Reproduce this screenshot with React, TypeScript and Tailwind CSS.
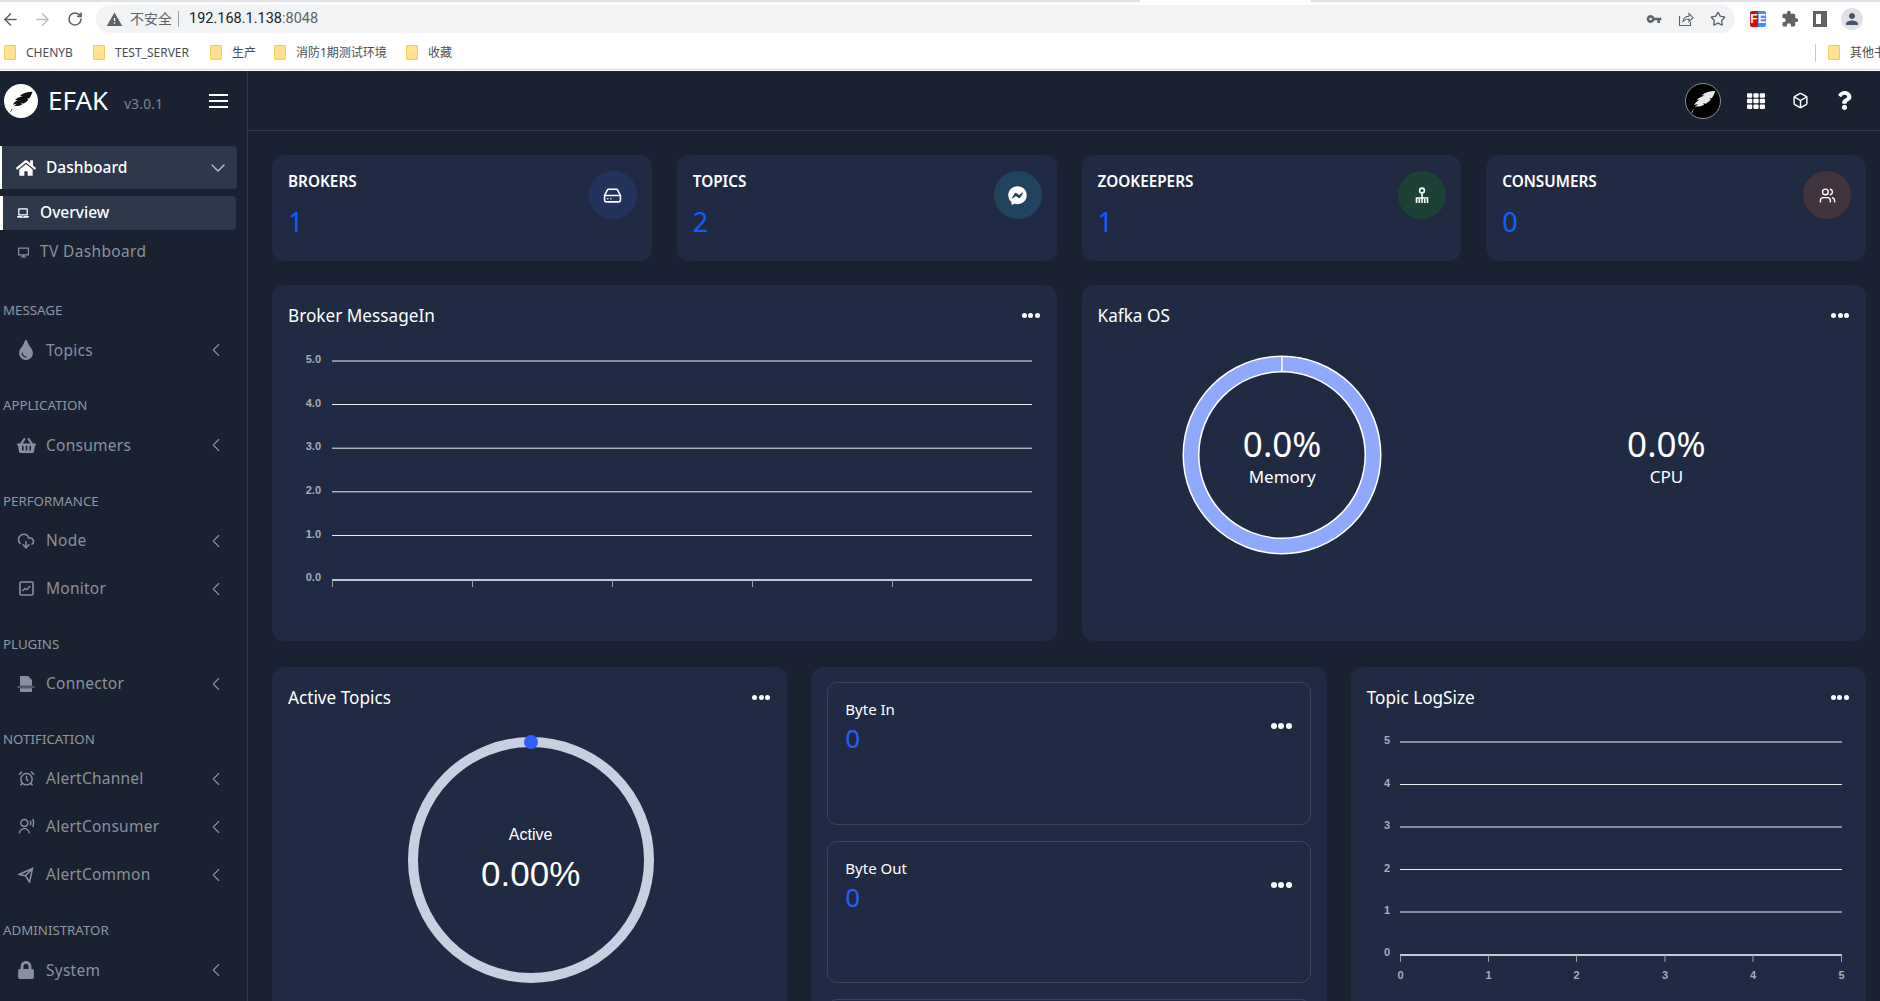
import type { ReactNode } from "react";
import { ArrowLeft, ArrowRight, Box, ChevronDown, ChevronLeft, CloudDownload, HardDrive, RotateCw, Star, Users, AlarmClock } from "lucide-react";
import { FaDesktop, FaFacebookMessenger, FaHome, FaLaptop, FaLock, FaQuestion, FaShoppingBasket, FaTh, FaTint } from "react-icons/fa";
import { MdExtension, MdPerson, MdVpnKey, MdWarning } from "react-icons/md";
import { RiUserVoiceLine } from "react-icons/ri";

const FEATHER =
  "M2 22C3.5 19 5.5 16.5 8 14.5L4.5 15.5C5.5 13.5 7 12 9 11L6.5 11C8.5 9 11 8 13.5 7.5L11 7C14 4.8 18 3.5 22.5 3.5C21.8 6 20.8 8 19.5 9.7L17.5 9.7L18.7 10.8C17.5 12.3 16 13.5 14.5 14.3L12 14L13 15.2C10.5 16.6 8 17 5.5 16.5C4.5 18 3.5 20 2.8 22Z";

const bookmarks = [
  { label: "CHENYB", className: "w-[89px]" },
  { label: "TEST_SERVER", className: "w-[117px]" },
  { label: "生产", className: "w-[64px]" },
  { label: "消防1期测试环境", className: "w-[132px]" },
  { label: "收藏", className: "w-[60px]" },
];

function Feather({ size, color }: { size: number; color: string }) {
  return (
    <svg width={size} height={size} viewBox="0 0 24 24" fill={color}>
      <path d={FEATHER} />
    </svg>
  );
}

function Folder() {
  return <span className="h-[15px] w-[12px] shrink-0 rounded-[1px] border border-[#f2cf57] bg-[#fde293]" />;
}

function BrowserChrome() {
  return (
    <div className="h-[71px] shrink-0 bg-white font-['Noto_Sans','Noto_Sans_CJK_SC',sans-serif]">
      <div className="flex h-[2px]">
        <div className="w-[1140px] bg-[#dee1e6]" />
        <div className="w-[171px] bg-white" />
        <div className="flex-1 bg-[#dee1e6]" />
      </div>
      <div className="flex h-[34px] items-center">
        <div className="flex w-[96px] items-center pl-[1px] text-[#5f6368]">
          <ArrowLeft size={19} strokeWidth={2} />
          <ArrowRight size={19} strokeWidth={2} className="ml-[13px] text-[#bcbfc4]" />
          <RotateCw size={16} strokeWidth={2.4} className="ml-[15px]" />
        </div>
        <div className="flex h-[28px] w-[1639px] items-center rounded-full bg-[#f1f3f4] pl-[10px] text-[#5f6368]">
          <MdWarning size={17} />
          <span className="ml-[7px] text-[14px] leading-[20px]">不安全</span>
          <span className="ml-[6px] h-[16px] w-px bg-[#9aa0a6]" />
          <span className="ml-[10px] font-['Roboto',sans-serif] text-[14.5px] text-[#202124]">
            192.168.1.138<span className="text-[#5f6368]">:8048</span>
          </span>
          <div className="ml-auto flex items-center gap-[16px] pr-[9px]">
            <MdVpnKey size={16} />
            <svg width="16" height="16" viewBox="0 0 16 16" fill="none" stroke="currentColor" strokeWidth="1.1">
              <path d="M1.5 5v9.5h11V11M5 10.5C5.5 7 8 5.3 11 5.3V2.5l4 4.2-4 4V8C8.5 8 6.5 8.7 5 10.5Z" />
            </svg>
            <Star size={16} strokeWidth={2} />
          </div>
        </div>
        <div className="flex flex-1 items-center pl-[15px] text-[#5f6368]">
          <span className="flex h-[16px] w-[16px] overflow-hidden rounded-[2px] font-['Liberation_Sans',sans-serif] text-[12px] leading-[16px] font-bold text-white">
            <span className="w-[8px] bg-[#ee0000] text-center">F</span>
            <span className="w-[8px] bg-[#4a8af4] text-center">E</span>
          </span>
          <MdExtension size={18} className="ml-[15px]" />
          <span className="ml-[14px] flex h-[16px] w-[14px] justify-start border-[3px] border-r-[6px] border-[#5f6368] bg-white" />
          <span className="ml-[14px] flex h-[22px] w-[22px] items-center justify-center rounded-full bg-[#dfe1e5] text-[#45556c]">
            <MdPerson size={18} />
          </span>
        </div>
      </div>
      <div className="flex h-[34px] items-center border-b border-[#dadce0] pl-[4px] text-[12px] text-[#4a4e52]">
        {bookmarks.map((b) => (
          <div key={b.label} className={`flex shrink-0 items-center gap-[10px] ${b.className}`}>
            <Folder />
            <span className="whitespace-nowrap">{b.label}</span>
          </div>
        ))}
        <div className="ml-auto flex w-[65px] shrink-0 items-center gap-[10px] overflow-hidden border-l border-[#c9cbcf] pl-[12px]">
          <Folder />
          <span className="whitespace-nowrap">其他书签</span>
        </div>
      </div>
    </div>
  );
}

function MonitorIcon() {
  return (
    <svg width="15" height="15" viewBox="0 0 15 15" fill="none" stroke="currentColor">
      <rect x="1" y="1" width="13" height="13" rx="1" strokeWidth="1.6" />
      <path d="M3.5 10 6 7.5l2 1.2L11 5" strokeWidth="1.4" />
    </svg>
  );
}

function ConnectorIcon() {
  return (
    <svg width="18" height="18" viewBox="0 0 18 18" fill="currentColor">
      <path d="M3 1h8l4 4v5.8H3V1ZM3 13.2h12V16a1 1 0 0 1-1 1H4a1 1 0 0 1-1-1v-2.8ZM0.5 11.6h17v1H0.5z" />
    </svg>
  );
}

function PlaneIcon() {
  return (
    <svg width="16" height="16" viewBox="0 0 16 16" fill="none" stroke="currentColor" strokeWidth="1.5">
      <path d="M14.5 1.5 1 7.5l6.5 1.2 4 6.5 3-13.7ZM7.5 8.7l7-7.2" />
    </svg>
  );
}

const navSections: { label: string; items: { name: string; icon: ReactNode }[] }[] = [
  { label: "MESSAGE", items: [{ name: "Topics", icon: <FaTint size={20} /> }] },
  { label: "APPLICATION", items: [{ name: "Consumers", icon: <FaShoppingBasket size={19} /> }] },
  {
    label: "PERFORMANCE",
    items: [
      { name: "Node", icon: <CloudDownload size={18} strokeWidth={2} /> },
      { name: "Monitor", icon: <MonitorIcon /> },
    ],
  },
  { label: "PLUGINS", items: [{ name: "Connector", icon: <ConnectorIcon /> }] },
  {
    label: "NOTIFICATION",
    items: [
      { name: "AlertChannel", icon: <AlarmClock size={17} strokeWidth={2} /> },
      { name: "AlertConsumer", icon: <RiUserVoiceLine size={17} /> },
      { name: "AlertCommon", icon: <PlaneIcon /> },
    ],
  },
  { label: "ADMINISTRATOR", items: [{ name: "System", icon: <FaLock size={18} /> }] },
];

function Sidebar() {
  return (
    <aside className="flex w-[248px] shrink-0 flex-col border-r border-[#333b4a]">
      <div className="flex h-[59px] shrink-0 items-center pl-[4px]">
        <span className="flex h-[34px] w-[34px] items-center justify-center rounded-full bg-white">
          <Feather size={26} color="#111" />
        </span>
        <span className="mb-[2px] ml-[10px] text-[26px] leading-none text-white">EFAK</span>
        <span className="ml-[16px] mt-[9px] text-[13.5px] leading-none tracking-[0.3px] text-[#7f8692]">v3.0.1</span>
        <span className="ml-[46px] flex w-[19px] flex-col gap-[4px]">
          <span className="h-[2px] bg-white" />
          <span className="h-[2px] bg-white" />
          <span className="h-[2px] bg-white" />
        </span>
      </div>
      <nav className="mt-[16px] flex flex-col">
        <div className="flex h-[43px] w-[237px] items-center rounded-r-[4px] border-l-2 border-white bg-[#2e384b] text-white">
          <span className="flex w-[44px] justify-center pl-[3px]">
            <FaHome size={20} />
          </span>
          <span className="text-[15.5px] font-medium">Dashboard</span>
          <ChevronDown size={24} strokeWidth={1.2} className="ml-auto mr-[7px] text-[#c5c9d0]" />
        </div>
        <div className="mt-[7px] flex h-[34px] w-[236px] items-center rounded-r-[4px] border-l-[3px] border-white bg-[#2e384b] text-white">
          <span className="flex w-[37px] justify-center pl-[3px]">
            <FaLaptop size={12} />
          </span>
          <span className="text-[15.5px] font-medium">Overview</span>
        </div>
        <div className="mt-[5px] flex h-[34px] items-center pl-[3px] text-[#8a919c]">
          <span className="flex w-[37px] justify-center pl-[3px]">
            <FaDesktop size={11} />
          </span>
          <span className="text-[15.5px] tracking-[0.35px]">TV Dashboard</span>
        </div>
        <div className="mt-[6px]">
          {navSections.map((section) => (
            <div key={section.label} className="mt-[26.2px]">
              <div className="flex h-[20px] items-center pl-[3px] text-[13.3px] text-[#8f96a1]">{section.label}</div>
              <div className="mt-[9px] flex flex-col gap-[8px]">
                {section.items.map((item) => (
                  <div key={item.name} className="flex h-[40px] items-center text-[#8a919c]">
                    <span className="flex w-[46px] justify-center pl-[6px]">{item.icon}</span>
                    <span className="text-[15.5px] tracking-[0.25px]">{item.name}</span>
                    <ChevronLeft size={22} strokeWidth={1.2} className="ml-auto mr-[20px]" />
                  </div>
                ))}
              </div>
            </div>
          ))}
        </div>
      </nav>
    </aside>
  );
}

function Dots({ large }: { large?: boolean }) {
  const dot = large ? "h-[6px] w-[6px] rounded-full bg-white" : "h-[5px] w-[5px] rounded-full bg-white";
  return (
    <span className="flex gap-[1.5px]">
      <span className={dot} />
      <span className={dot} />
      <span className={dot} />
    </span>
  );
}

function SitemapIcon() {
  return (
    <svg width="14" height="17" viewBox="0 0 14 17" fill="none" stroke="white" strokeWidth="1.6">
      <circle cx="7" cy="3.5" r="2.4" />
      <path d="M7 6v5M1.5 16v-5h11v5M7 11v5" />
      <path d="M4.3 12v4" />
      <path d="M9.7 12v4" />
    </svg>
  );
}

function StatCard({ title, value, circle, icon }: { title: string; value: string; circle: string; icon: ReactNode }) {
  return (
    <div className="flex h-[106px] justify-between rounded-[12px] bg-[#202b43] pl-[16px] pr-[15px]">
      <div>
        <div className="mt-[16px] text-[15.3px] leading-[21px] font-semibold text-white">{title}</div>
        <div className="mt-[12px] text-[27px] leading-[36px] text-[#0f5fff]">{value}</div>
      </div>
      <span className={`mt-[16px] flex h-[48px] w-[48px] items-center justify-center rounded-full ${circle}`}>{icon}</span>
    </div>
  );
}

function CardHeader({ title }: { title: string }) {
  return (
    <div className="flex h-[48px] items-start justify-between pl-[16px] pr-[17px] pt-[18px]">
      <span className="text-[17.2px] leading-[26px] text-white">{title}</span>
      <span className="pt-[10px]">
        <Dots />
      </span>
    </div>
  );
}

function BrokerChart() {
  const rows = [
    { label: "5.0", y: 28 },
    { label: "4.0", y: 71.5 },
    { label: "3.0", y: 115.2 },
    { label: "2.0", y: 158.8 },
    { label: "1.0", y: 202.5 },
  ];
  return (
    <svg width="784" height="300" className="block font-['Liberation_Sans',sans-serif]">
      {rows.map((r) => (
        <g key={r.label}>
          <line x1="60" x2="760" y1={r.y} y2={r.y} stroke="#ffffff" strokeOpacity="0.92" />
          <text x="49" y={r.y + 2} textAnchor="end" fontSize="11" fontWeight="700" fill="#a7adb8">
            {r.label}
          </text>
        </g>
      ))}
      <line x1="60" x2="760" y1="247" y2="247" stroke="#c3c7cf" strokeWidth="2" />
      <text x="49" y="248" textAnchor="end" fontSize="11" fontWeight="700" fill="#a7adb8">
        0.0
      </text>
      {[60, 200, 340, 480, 620].map((x) => (
        <line key={x} x1={x + 0.5} x2={x + 0.5} y1="247" y2="254" stroke="#9aa0ab" />
      ))}
    </svg>
  );
}

function KafkaOs() {
  return (
    <div className="mt-[22px] grid grid-cols-2 px-[11px]">
      <div className="flex justify-center pr-[2px]">
        <div className="relative h-[200px] w-[200px]">
          <svg width="200" height="200" viewBox="0 0 200 200" className="block">
            <circle cx="100" cy="100" r="91" fill="none" stroke="#ffffff" strokeWidth="17" />
            <circle cx="100" cy="100" r="91" fill="none" stroke="#8fa9ff" strokeWidth="14" />
            <line x1="100" y1="2" x2="100" y2="17" stroke="#ffffff" strokeWidth="1.5" />
          </svg>
          <div className="absolute inset-0 flex flex-col items-center justify-center pb-[3px] text-white">
            <span className="text-[35px] leading-[46px]">0.0%</span>
            <span className="text-[17px] leading-[20px]">Memory</span>
          </div>
        </div>
      </div>
      <div className="flex justify-center pl-[4px]">
        <div className="flex h-[200px] w-[200px] flex-col items-center justify-center pb-[3px] text-white">
          <span className="text-[35px] leading-[46px]">0.0%</span>
          <span className="text-[17px] leading-[20px]">CPU</span>
        </div>
      </div>
    </div>
  );
}

function ActiveRing() {
  return (
    <div className="mt-[17px] flex justify-center pl-[2px]">
      <div className="relative h-[256px] w-[256px]">
        <svg width="256" height="256" viewBox="0 0 256 256" className="block">
          <circle cx="128" cy="128" r="118" fill="none" stroke="#c8cfe1" strokeWidth="10" />
          <circle cx="128" cy="10" r="7" fill="#2f60ff" />
        </svg>
        <div className="absolute inset-0 flex flex-col items-center pt-[92px] font-['Liberation_Sans',sans-serif] text-white">
          <span className="text-[16px] leading-[22px]">Active</span>
          <span className="mt-[6px] text-[35px] leading-[44px]">0.00%</span>
        </div>
      </div>
    </div>
  );
}

function ByteCard({ title, className }: { title: string; className: string }) {
  return (
    <div className={`flex shrink-0 justify-between rounded-[10px] border border-[#3a4557] pl-[17px] pr-[18px] ${className}`}>
      <div>
        <div className="mt-[15px] text-[15px] leading-[22px] text-white">{title}</div>
        <div className="mt-[1px] text-[26px] leading-[34px] text-[#2b5df5]">0</div>
      </div>
      <span className="mt-[40px]">
        <Dots large />
      </span>
    </div>
  );
}

function LogSizeChart() {
  const ys = [
    { label: "5", y: 27 },
    { label: "4", y: 69.5 },
    { label: "3", y: 112 },
    { label: "2", y: 154.5 },
    { label: "1", y: 197 },
  ];
  const xs = [49, 137, 225, 313.5, 401.5, 490];
  return (
    <svg width="515" height="280" className="block font-['Liberation_Sans',sans-serif]">
      {ys.map((r) => (
        <g key={r.label}>
          <line x1="49" x2="491" y1={r.y} y2={r.y} stroke="#ffffff" strokeOpacity="0.92" />
          <text x="39" y={r.y + 2} textAnchor="end" fontSize="11" fontWeight="700" fill="#a7adb8">
            {r.label}
          </text>
        </g>
      ))}
      <line x1="49" x2="491" y1="240" y2="240" stroke="#c3c7cf" strokeWidth="2" />
      <text x="39" y="241" textAnchor="end" fontSize="11" fontWeight="700" fill="#a7adb8">
        0
      </text>
      {xs.map((x, i) => (
        <g key={x}>
          <line x1={x + 0.5} x2={x + 0.5} y1="240" y2="247" stroke="#9aa0ab" />
          <text x={x + 0.5} y="264" textAnchor="middle" fontSize="11" fontWeight="700" fill="#a7adb8">
            {i}
          </text>
        </g>
      ))}
    </svg>
  );
}

export default function App() {
  return (
    <div className="flex h-[1001px] w-[1880px] flex-col overflow-hidden bg-[#1a2231] font-['Noto_Sans',sans-serif]">
      <BrowserChrome />
      <div className="flex min-h-0 flex-1">
        <Sidebar />
        <main className="flex min-w-0 flex-1 flex-col">
          <header className="flex h-[60px] shrink-0 items-center border-b border-[#333b4a] text-white">
            <span className="ml-[1437px] flex h-[36px] w-[36px] items-center justify-center rounded-full border border-[#8b8f96] bg-black">
              <Feather size={28} color="#e9e9e9" />
            </span>
            <FaTh size={18} className="ml-[26px]" />
            <Box size={17} strokeWidth={2} className="ml-[27px]" />
            <FaQuestion size={19} className="ml-[26px]" />
          </header>
          <div className="flex flex-col pl-[24px] pr-[14px] pt-[24px]">
            <div className="grid grid-cols-4 gap-[25px]">
              <StatCard title="BROKERS" value="1" circle="bg-[#22345c]" icon={<HardDrive size={19} color="white" strokeWidth={2} />} />
              <StatCard title="TOPICS" value="2" circle="bg-[#20445e]" icon={<FaFacebookMessenger size={19} color="white" />} />
              <StatCard title="ZOOKEEPERS" value="1" circle="bg-[#1c4238]" icon={<SitemapIcon />} />
              <StatCard title="CONSUMERS" value="0" circle="bg-[#41343f]" icon={<Users size={17} color="white" strokeWidth={2} />} />
            </div>
            <div className="mt-[24px] grid grid-cols-2 gap-[25px]">
              <div className="h-[356px] rounded-[12px] bg-[#202b43]">
                <CardHeader title="Broker MessageIn" />
                <BrokerChart />
              </div>
              <div className="h-[356px] rounded-[12px] bg-[#202b43]">
                <CardHeader title="Kafka OS" />
                <KafkaOs />
              </div>
            </div>
            <div className="mt-[26px] grid h-[400px] grid-cols-3 gap-[24px]">
              <div className="rounded-[12px] bg-[#202b43]">
                <CardHeader title="Active Topics" />
                <ActiveRing />
              </div>
              <div className="flex flex-col gap-[16px] rounded-[12px] bg-[#202b43] px-[16px] pt-[15px]">
                <ByteCard title="Byte In" className="h-[143px]" />
                <ByteCard title="Byte Out" className="h-[142px]" />
                <div className="h-[142px] shrink-0 rounded-[10px] border border-[#3a4557]" />
              </div>
              <div className="rounded-[12px] bg-[#202b43]">
                <CardHeader title="Topic LogSize" />
                <LogSizeChart />
              </div>
            </div>
          </div>
        </main>
      </div>
    </div>
  );
}
